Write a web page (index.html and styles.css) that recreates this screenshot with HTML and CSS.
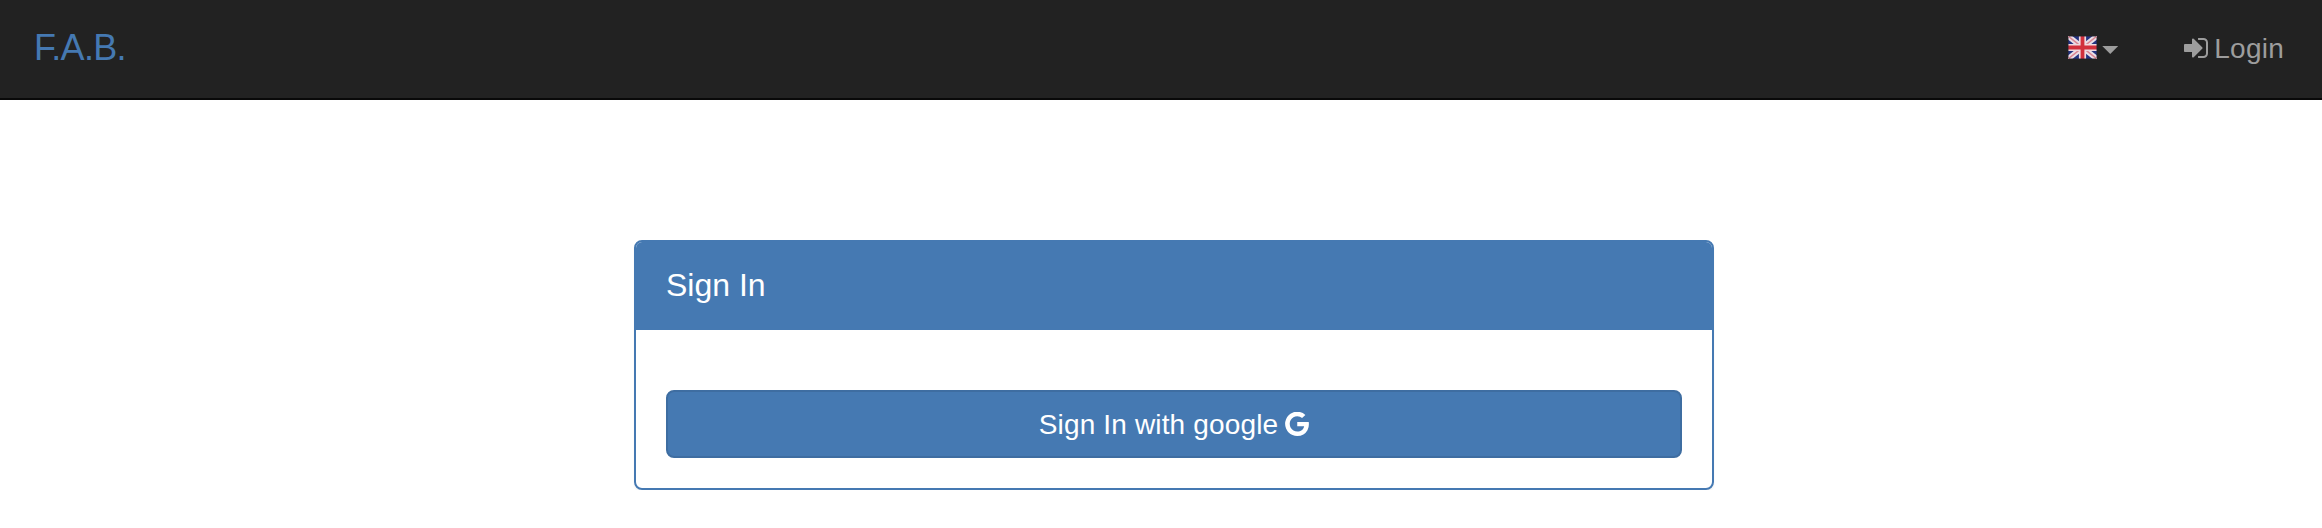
FILE: index.html
```html
<!DOCTYPE html>
<html lang="en">
<head>
<meta charset="utf-8">
<title>F.A.B.</title>
<link rel="stylesheet" href="styles.css">
</head>
<body>
<nav class="navbar">
  <a class="brand">F.A.B.</a>
  <div class="nav-right">
    <a class="language">
      <svg class="flag" viewBox="0 0 29 23">
        <defs><clipPath id="flag-shape"><rect width="29" height="23" rx="1"/></clipPath></defs>
        <g clip-path="url(#flag-shape)">
          <rect width="29" height="23" fill="#233380"/>
          <path d="M0 0L29 23M29 0L0 23" stroke="#e9dfe8" stroke-width="5.4"/>
          <path d="M0 0L29 23M29 0L0 23" stroke="#dc8793" stroke-width="1.5"/>
          <path d="M14.5 0V23M0 11.5H29" stroke="#eed9df" stroke-width="7.2"/>
          <path d="M14.5 0V23M0 11.5H29" stroke="#d2303c" stroke-width="3.8"/>
          <rect x=".5" y=".5" width="28" height="22" rx="1" fill="none" stroke="#26222e" stroke-opacity=".45"/>
        </g>
      </svg>
      <span class="caret"></span>
    </a>
    <a class="login">
      <svg class="login-icon" viewBox="0 0 1536 1280"><path fill="currentColor" d="M1184 640q0 26-19 45l-544 544q-19 19-45 19t-45-19-19-45v-288h-448q-26 0-45-19t-19-45v-384q0-26 19-45t45-19h448v-288q0-26 19-45t45-19 45 19l544 544q19 19 19 45zM1536 288v704q0 119-84.500 203.500t-203.500 84.500h-320q-13 0-22.500-9.500t-9.500-22.500q0-4-1-20t-.5-26.500 3-23.500 10-19.500 20.500-6.500h320q66 0 113-47t47-113v-704q0-66-47-113t-113-47h-312l-11.500-1-11.500-3-8-5.500-7-9-2-13.500q0-4-1-20t-.5-26.500 3-23.500 10-19.500 20.500-6.500h320q119 0 203.500 84.500t84.500 203.500z"/></svg>
      <span class="login-label">Login</span>
    </a>
  </div>
</nav>
<main class="panel">
  <div class="panel-heading">Sign In</div>
  <div class="panel-body">
    <a class="button">
      <span>Sign In with google</span>
      <svg class="google-icon" viewBox="0 110 1505 1518"><path fill="currentColor" d="M768 750h725q12 67 12 128 0 217-91 387.500t-259.500 266.500-386.500 96q-157 0-299-60.500t-245-163.500-163.500-245-60.500-299 60.500-299 163.500-245 245-163.500 299-60.500q300 0 515 201l-209 201q-123-119-306-119-129 0-238.500 65t-173.500 176.500-64 243.500 64 243.500 173.500 176.500 238.500 65q87 0 160-24t120-60 82-82 51.500-87 22.500-78h-436v-264z"/></svg>
    </a>
  </div>
</main>
</body>
</html>
```
FILE: styles.css
```css
* {
  box-sizing: border-box;
}

body {
  margin: 0;
  background: #fff;
  font: 28px/40px "Liberation Sans", Arial, sans-serif;
}

.navbar {
  display: flex;
  justify-content: space-between;
  height: 100px;
  padding: 0 38px 0 34px;
  background: #222;
  border-bottom: 2px solid #090909;
  color: #9d9d9d;
}

.brand {
  padding-top: 28px;
  font-size: 36px;
  letter-spacing: -.7px;
  color: #4579b2;
}

.nav-right {
  display: flex;
  gap: 66px;
}

.language {
  display: flex;
  gap: 5px;
  padding-top: 36px;
}

.flag {
  width: 29px;
  height: 23px;
}

.caret {
  width: 16px;
  height: 8px;
  margin-top: 10px;
  background: currentColor;
  clip-path: polygon(0 0, 100% 0, 50% 100%);
}

.login {
  display: flex;
  gap: 6px;
  padding-top: 29px;
}

.login-label {
  letter-spacing: .25px;
}

.login-icon {
  width: 24px;
  height: 20px;
  margin-top: 9px;
}

.panel {
  width: 1080px;
  height: 250px;
  margin: 140px 0 0 634px;
  border: 2px solid #4579b2;
  border-radius: 8px;
  box-shadow: 0 2px 2px rgba(0, 0, 0, .05);
}

.panel-heading {
  height: 88px;
  padding: 23px 30px;
  border-radius: 6px 6px 0 0;
  background: #4579b2;
  color: #fff;
  font-size: 32px;
}

.panel-body {
  padding: 60px 30px 30px;
}

.button {
  display: flex;
  justify-content: center;
  gap: 7px;
  height: 68px;
  padding-top: 13px;
  border: 2px solid #3e6da1;
  border-radius: 8px;
  background: #4579b2;
  color: #fff;
  letter-spacing: .15px;
}

.google-icon {
  width: 24px;
  height: 24px;
  margin-top: 7px;
}
```
